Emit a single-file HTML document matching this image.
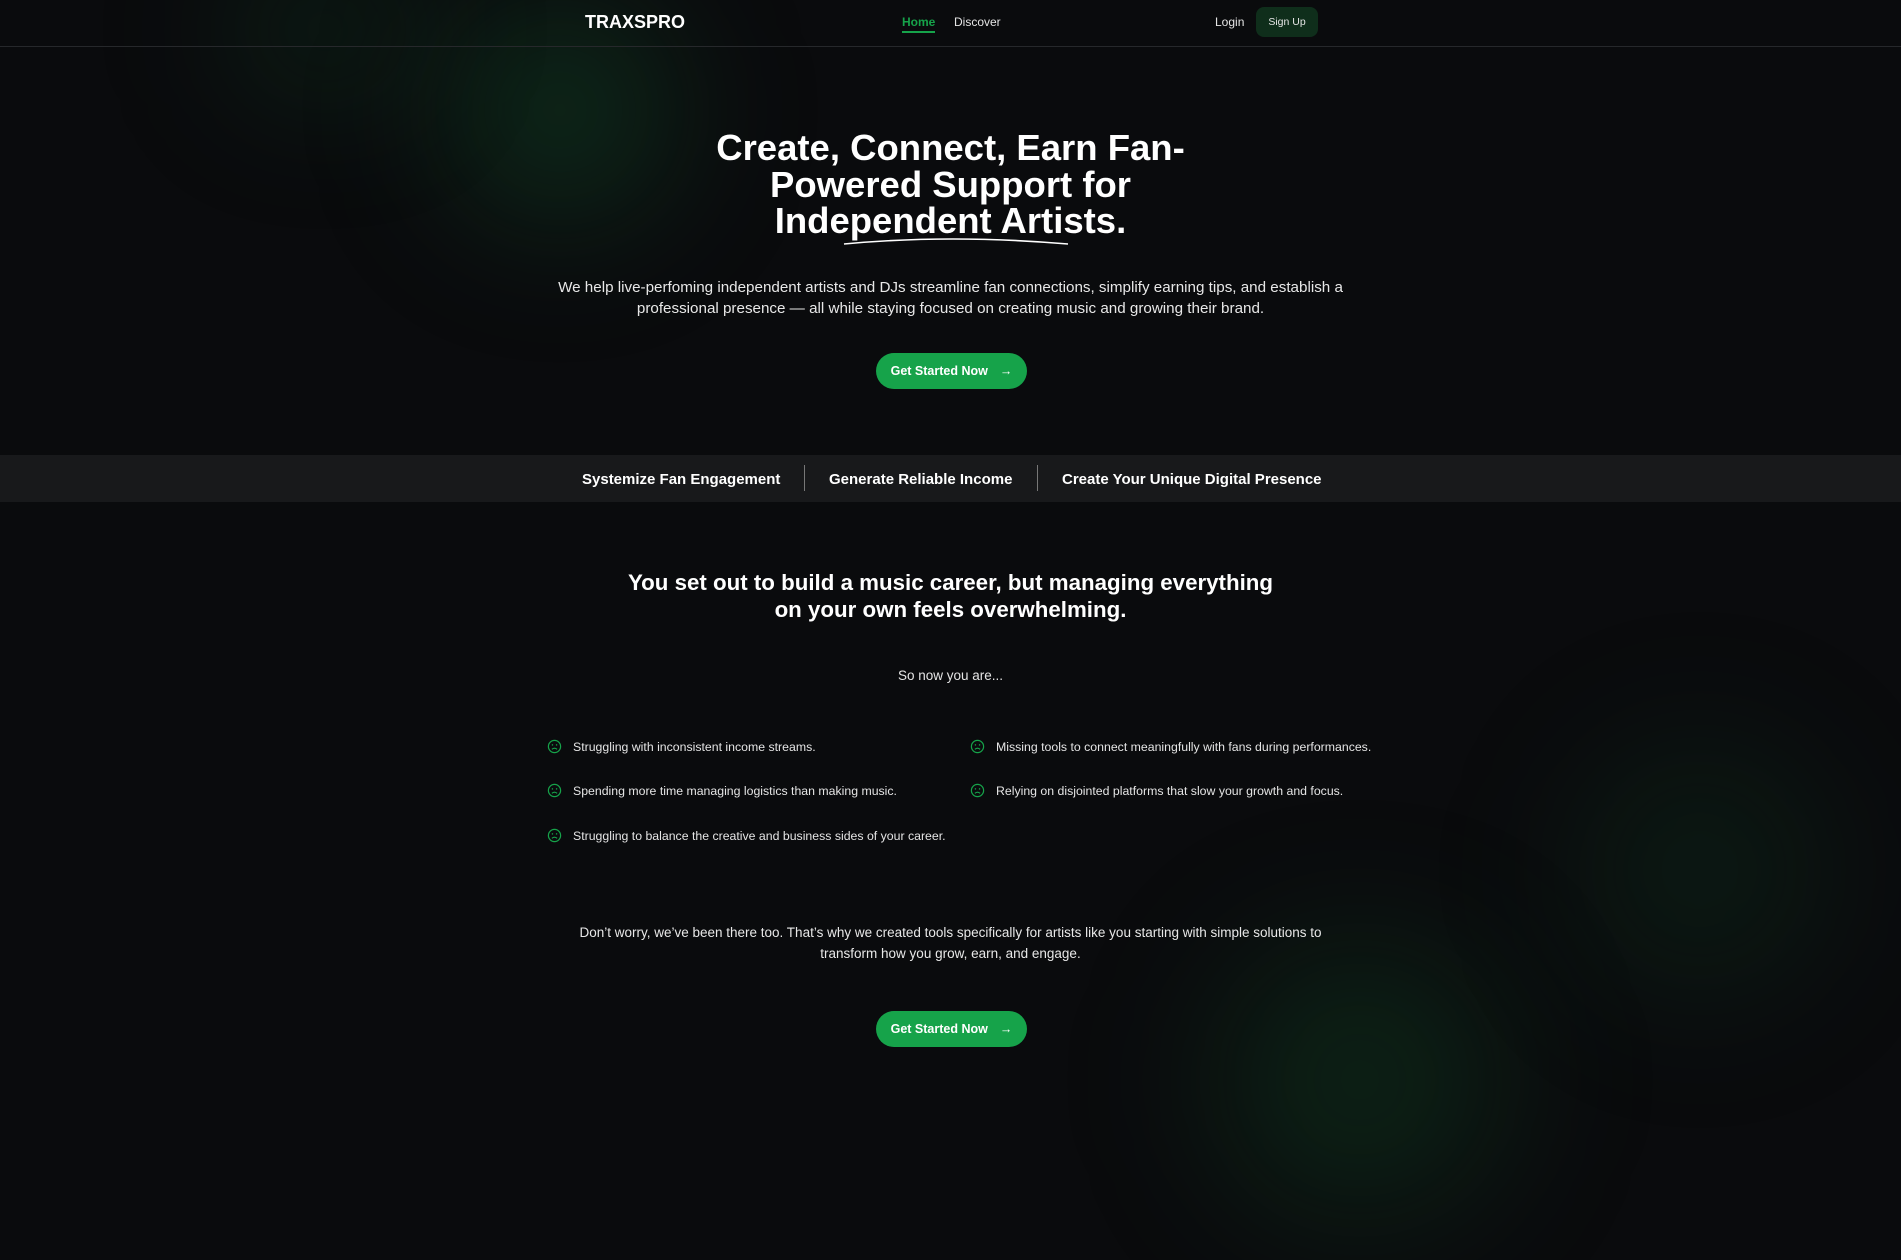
<!DOCTYPE html>
<html><head><meta charset="utf-8"><style>
*{margin:0;padding:0;box-sizing:border-box}
html,body{width:1901px;height:1099px;overflow:hidden;background:#0a0b0d;font-family:"Liberation Sans",sans-serif;color:#fff}
.a{position:absolute}
.c{left:0;width:1901px;text-align:center}
.glow{position:absolute;border-radius:50%;filter:blur(60px)}
nav{position:absolute;left:0;top:0;width:1901px;height:47px;border-bottom:1px solid #26282b}
.btn{position:absolute;left:876px;width:151px;height:36px;border-radius:18px;background:#16a34a;color:#fff;font-weight:bold;font-size:12.5px;display:flex;align-items:center;justify-content:center;gap:12px}
.li{position:absolute;font-size:12.3px;color:#e5e5e5;display:flex;align-items:center;gap:11px}
.li svg{flex:none}
</style></head><body>
<div class="glow" style="left:380px;top:-40px;width:360px;height:300px;background:radial-gradient(circle,rgba(22,101,52,.45),rgba(22,101,52,0) 70%)"></div>
<div class="glow" style="left:150px;top:-60px;width:350px;height:180px;background:radial-gradient(circle,rgba(22,101,52,.25),rgba(22,101,52,0) 70%)"></div>
<div class="glow" style="left:1120px;top:900px;width:480px;height:360px;background:radial-gradient(circle,rgba(22,110,52,.3),rgba(22,101,52,0) 70%)"></div>
<div class="glow" style="left:1520px;top:680px;width:360px;height:380px;background:radial-gradient(circle,rgba(22,101,52,.22),rgba(22,101,52,0) 70%)"></div>

<nav>
<div class="a" style="left:585px;top:12px;font-size:18px;font-weight:bold">TRAXSPRO</div>
<div class="a" style="left:902px;top:15px;font-size:12px;font-weight:bold;color:#16a34a;border-bottom:2px solid #16a34a;padding-bottom:2px">Home</div>
<div class="a" style="left:954px;top:15px;font-size:12px;color:#e5e5e5">Discover</div>
<div class="a" style="left:1215px;top:15px;font-size:12px;color:#e5e5e5">Login</div>
<div class="a" style="left:1256px;top:7px;width:62px;height:30px;border-radius:8px;background:#0f2e1b;font-size:10.5px;display:flex;align-items:center;justify-content:center;color:#e5e5e5">Sign Up</div>
</nav>

<div class="a c" style="top:130px;font-size:36.5px;font-weight:bold;line-height:36.5px">Create, Connect, Earn Fan-<br>Powered Support for<br>Independent Artists.</div>
<svg class="a" style="left:840px;top:232px" width="230" height="16"><path d="M4 12 Q110 2 228 12" stroke="#fff" stroke-width="1.6" fill="none"/></svg>

<div class="a c" style="top:277px;font-size:15.2px;line-height:21px;color:#e8e8e8">We help live-perfoming independent artists and DJs streamline fan connections, simplify earning tips, and establish a<br>professional presence — all while staying focused on creating music and growing their brand.</div>

<div class="btn" style="top:353px">Get Started Now <span>→</span></div>

<div class="a" style="left:0;top:455px;width:1901px;height:47px;background:#18191b"></div>
<div class="a" style="left:582px;top:471px;font-size:15px;font-weight:bold">Systemize Fan Engagement</div>
<div class="a" style="left:804px;top:465px;width:1px;height:26px;background:#777"></div>
<div class="a" style="left:829px;top:471px;font-size:15px;font-weight:bold">Generate Reliable Income</div>
<div class="a" style="left:1037px;top:465px;width:1px;height:26px;background:#777"></div>
<div class="a" style="left:1062px;top:471px;font-size:15px;font-weight:bold">Create Your Unique Digital Presence</div>

<div class="a c" style="top:569px;font-size:22.3px;font-weight:bold;line-height:27px">You set out to build a music career, but managing everything<br>on your own feels overwhelming.</div>
<div class="a c" style="top:668px;font-size:13.5px;color:#e5e5e5">So now you are...</div>

<svg width="0" height="0" style="position:absolute"><defs><symbol id="s" viewBox="0 0 16 16"><circle cx="8" cy="8" r="6.5" stroke="#16a34a" stroke-width="1.3" fill="none"/><circle cx="5.8" cy="6.3" r=".8" fill="#16a34a"/><circle cx="10.2" cy="6.3" r=".8" fill="#16a34a"/><path d="M5.2 11 Q8 8.6 10.8 11" stroke="#16a34a" stroke-width="1.2" fill="none"/></symbol></defs></svg>
<div class="li" style="left:547px;top:739px"><svg width="15" height="15"><use href="#s"/></svg>Struggling with inconsistent income streams.</div>
<div class="li" style="left:547px;top:783px"><svg width="15" height="15"><use href="#s"/></svg>Spending more time managing logistics than making music.</div>
<div class="li" style="left:547px;top:828px"><svg width="15" height="15"><use href="#s"/></svg>Struggling to balance the creative and business sides of your career.</div>
<div class="li" style="left:970px;top:739px"><svg width="15" height="15"><use href="#s"/></svg>Missing tools to connect meaningfully with fans during performances.</div>
<div class="li" style="left:970px;top:783px"><svg width="15" height="15"><use href="#s"/></svg>Relying on disjointed platforms that slow your growth and focus.</div>

<div class="a c" style="top:922px;font-size:13.5px;line-height:21px;color:#e8e8e8">Don’t worry, we’ve been there too. That’s why we created tools specifically for artists like you starting with simple solutions to<br>transform how you grow, earn, and engage.</div>

<div class="btn" style="top:1011px">Get Started Now <span>→</span></div>
</body></html>
